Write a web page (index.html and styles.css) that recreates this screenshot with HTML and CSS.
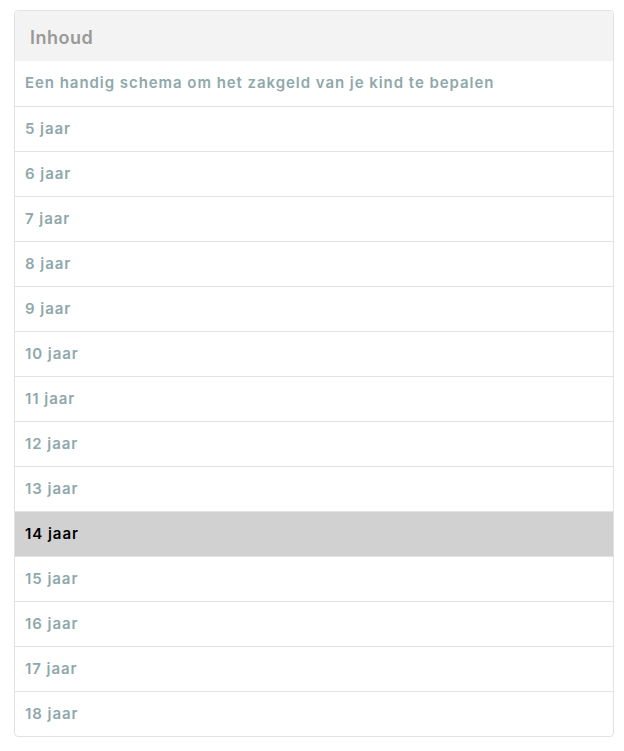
FILE: index.html
```html
<!DOCTYPE html>
<html lang="nl">
<head>
  <meta charset="UTF-8" />
  <meta name="viewport" content="width=device-width, initial-scale=1" />
  <title>Inhoud</title>
  <link rel="stylesheet" href="styles.css">
</head>
<body>

  <nav class="toc" aria-label="Inhoud">
    <div class="toc-title">Inhoud</div>
    <ul class="toc-list">
      <li><a href="#schema">Een handig schema om het zakgeld van je kind te bepalen</a></li>
      <li><a href="#5-jaar">5 jaar</a></li>
      <li><a href="#6-jaar">6 jaar</a></li>
      <li><a href="#7-jaar">7 jaar</a></li>
      <li><a href="#8-jaar">8 jaar</a></li>
      <li><a href="#9-jaar">9 jaar</a></li>
      <li><a href="#10-jaar">10 jaar</a></li>
      <li><a href="#11-jaar">11 jaar</a></li>
      <li><a href="#12-jaar">12 jaar</a></li>
      <li><a href="#13-jaar">13 jaar</a></li>
      <li class="active"><a href="#14-jaar">14 jaar</a></li>
      <li><a href="#15-jaar">15 jaar</a></li>
      <li><a href="#16-jaar">16 jaar</a></li>
      <li><a href="#17-jaar">17 jaar</a></li>
      <li><a href="#18-jaar">18 jaar</a></li>
    </ul>
  </nav>

</body>
</html>
```

FILE: styles.css
```css
body {
  margin: 0;
  padding: 10px 10px 14px 14px;
  background: #fff;
  font-family: 'Inter', sans-serif;
}

.toc {
  width: 598px;
  border: 1px solid #e2e2e2;
  border-radius: 4px;
  overflow: hidden;
}

.toc-title {
  height: 50px;
  line-height: 53px;
  padding-left: 15px;
  background: #f3f3f3;
  color: #999;
  font-size: 18px;
  font-weight: 600;
  letter-spacing: 0.5px;
}

.toc-list {
  list-style: none;
  margin: 0;
  padding: 0;
}

.toc-list li {
  height: 44px;
  border-top: 1px solid #e2e2e2;
}

.toc-list li:first-child {
  border-top: none;
  height: 45px;
}

.toc-list a {
  display: block;
  height: 100%;
  line-height: 44px;
  padding-left: 10px;
  color: #8fa8ab;
  font-size: 15px;
  font-weight: 600;
  letter-spacing: 0.95px;
  text-decoration: none;
}

.toc-list li.active {
  background: #d1d1d1;
}

.toc-list li.active a {
  color: #000;
}
```
